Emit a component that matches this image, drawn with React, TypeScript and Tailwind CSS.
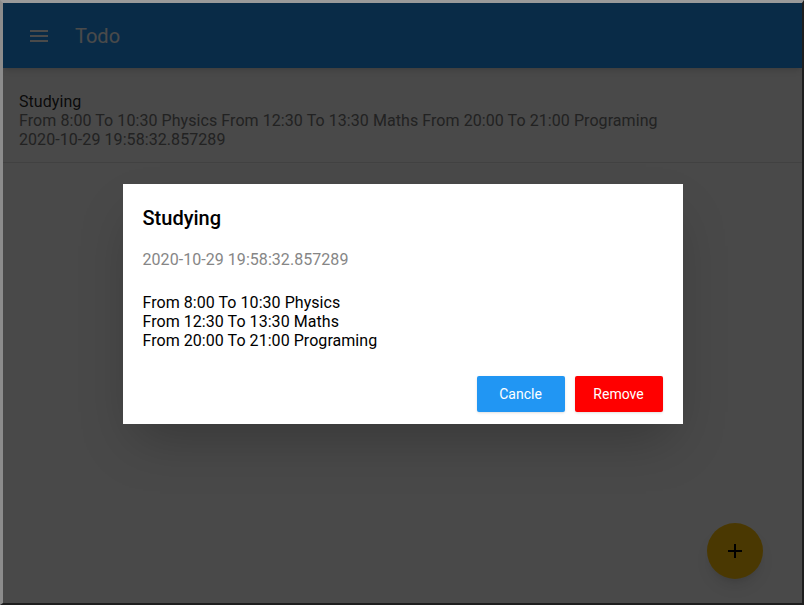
import React from "react";

const todo = {
  title: "Studying",
  date: "2020-10-29 19:58:32.857289",
  lines: [
    "From 8:00 To 10:30 Physics",
    "From 12:30 To 13:30 Maths",
    "From 20:00 To 21:00 Programing",
  ],
};

function MenuIcon() {
  return (
    <svg width="24" height="24" viewBox="0 0 24 24" fill="currentColor">
      <path d="M3 18h18v-2H3v2zm0-5h18v-2H3v2zm0-7v2h18V6H3z" />
    </svg>
  );
}

function AddIcon() {
  return (
    <svg width="24" height="24" viewBox="0 0 24 24" fill="currentColor">
      <path d="M19 13h-6v6h-2v-6H5v-2h6V5h2v6h6v2z" />
    </svg>
  );
}

export default function App() {
  return (
    <div
      className="relative w-[804px] h-[605px] overflow-hidden border-t-[3px] border-l-[3px] border-r-2 border-b-2 border-t-[#9a9a9a] border-l-[#8c8c8c] border-r-[#1e1e1e] border-b-[#1e1e1e] bg-[#fafafa]"
      style={{ fontFamily: "Roboto, 'Liberation Sans', sans-serif" }}
    >
      <div className="flex flex-col h-full">
        <header className="h-[65px] bg-[#2196f3] flex items-center pl-[24px] text-white shadow-md">
          <MenuIcon />
          <span className="ml-[24px] text-[20px] font-normal">Todo</span>
        </header>

        <div className="border-b border-[#e0e0e0] pl-[16px] pt-[24px] pb-[13px] text-[16px] leading-[19px] tracking-[0.07px]">
          <div className="text-black/[0.87]">{todo.title}</div>
          <div className="text-[#757575]">{todo.lines.join(" ")}</div>
          <div className="text-[#757575]">{todo.date}</div>
        </div>
      </div>

      <button className="absolute left-[704px] top-[520px] w-[56px] h-[56px] rounded-full bg-[#ffc107] text-black flex items-center justify-center shadow-lg">
        <AddIcon />
      </button>

      <div className="absolute inset-0 bg-black/[0.71] flex items-center justify-center">
        <div className="w-[560px] h-[240px] bg-white shadow-2xl flex flex-col px-[20px] pt-[24px] pb-[12px] translate-y-[1px]">
          <h2 className="text-[20px] leading-[20px] font-medium text-black">{todo.title}</h2>
          <div className="mt-[22px] text-[16px] leading-[19px] tracking-[0.05px] text-[#868686]">{todo.date}</div>
          <div className="mt-[24px] text-[16px] leading-[19px] tracking-[0.05px] text-black">
            {todo.lines.map((l) => (
              <div key={l}>{l}</div>
            ))}
          </div>
          <div className="mt-auto flex justify-end gap-[10px]">
            <button className="w-[88px] h-[36px] rounded-[2px] bg-[#2196f3] text-white text-[14px] shadow-sm">
              Cancle
            </button>
            <button className="w-[88px] h-[36px] rounded-[2px] bg-[#ff0000] text-white text-[14px] shadow-sm">
              Remove
            </button>
          </div>
        </div>
      </div>
    </div>
  );
}
